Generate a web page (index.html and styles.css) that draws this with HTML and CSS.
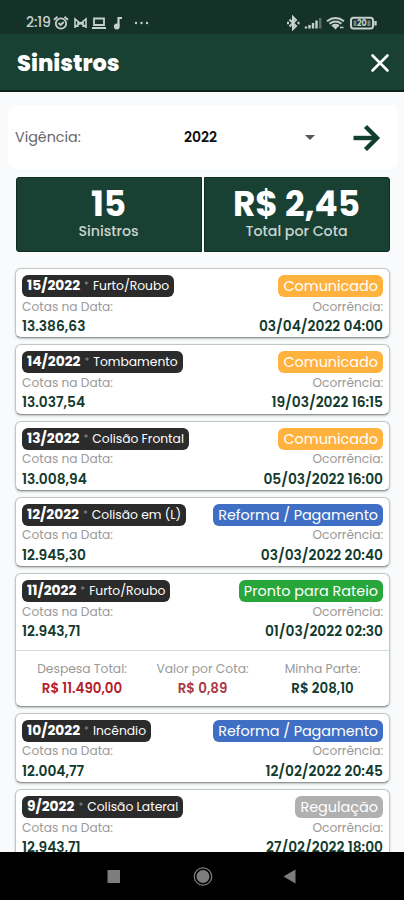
FILE: index.html
```
<!DOCTYPE html>
<html lang="pt-BR">
<head>
  <meta charset="UTF-8" />
  <meta name="viewport" content="width=device-width, initial-scale=1.0" />
  <title>Sinistros</title>
  <link rel="stylesheet" href="styles.css">
</head>
<body>
  <div class="status-bar">
    <span class="time">2:19</span>
    <svg class="status-left" width="98" height="16" viewBox="0 0 98 16" fill="none" stroke="#c6d0cc" stroke-width="1.8">
      <circle cx="9" cy="8.5" r="5.2" />
      <path d="M2 4.7l3.5-3M16 4.7l-3.5-3M6.5 8l2.2 2 3-3" />
      <path d="M23 13V4l5.5 4.5L34 4v9M26 12V7M31 12V7M23 12l5.5-4 5.5 4" stroke-width="1.6" />
      <path d="M42 3.5h10V10H42zM40 13h14" />
      <path d="M66.5 11V3H70" stroke-width="2.2" />
      <circle cx="64.8" cy="11.5" r="2" fill="#c6d0cc" />
      <g fill="#c6d0cc" stroke="none">
        <circle cx="84" cy="8" r="1.2" />
        <circle cx="89.5" cy="8" r="1.2" />
        <circle cx="95" cy="8" r="1.2" />
      </g>
    </svg>
    <svg class="status-right" width="92" height="16" viewBox="0 0 92 16" fill="none" stroke="#c6d0cc" stroke-width="1.4">
      <path d="M3.5 4.5L10 11l-3 3V2l3 3-6.5 6.5" stroke-width="2" />
      <path d="M1 8h2M11.5 8h2" stroke-width="2.4" />
      <g stroke-width="2.4">
        <path d="M20 13.5v-2M23.5 13.5V10M27 13.5V8M30.5 13.5V5.5" />
        <path d="M34.2 13.5V3" stroke="#5c706a" />
      </g>
      <path d="M41 6.3q8.5-6.5 17 0M43.5 8.7q6-4.5 12 0M46 11q3.5-2.3 7 0" stroke-width="2" />
      <path d="M47.5 11.3l2 2.2 2-2.2zM54 12.5h3.5" fill="#c6d0cc" />
      <rect x="65" y="2.8" width="22" height="10.7" rx="2.5" stroke-width="2" />
      <path d="M89.5 6v4.5" stroke-width="2.4" />
      <path d="M67.5 5.5h3V11h-3zM81.5 5.5h3V11h-3z" fill="#71837c" stroke="none" />
      <text x="71" y="11" class="battery-text">20</text>
    </svg>
  </div>

  <header class="header">
    <h1>Sinistros</h1>
    <svg width="20" height="20" viewBox="0 0 20 20" stroke="#fff" stroke-width="2.6" stroke-linecap="round">
      <path d="M2.5 2.5l15 15M17.5 2.5l-15 15" />
    </svg>
  </header>

  <main class="content">
    <div class="filter">
      <span class="filter-label">Vigência:</span>
      <span class="filter-value">2022</span>
      <span class="caret"></span>
      <svg width="28" height="28" viewBox="0 0 28 28" fill="none" stroke="#123f30" stroke-width="4.4">
        <path d="M.5 15H24" />
        <path d="M12.500 3.500L24 15 12.500 26.500" />
      </svg>
    </div>

    <div class="summary">
      <div class="summary-box">
        <strong>15</strong>
        <span>Sinistros</span>
      </div>
      <div class="summary-box total">
        <strong>R$ 2,45</strong>
        <span>Total por Cota</span>
      </div>
    </div>

    <div class="list">
      <div class="card">
        <div class="row">
          <span class="tag"><b>15/2022</b><i>*</i><span class="kind">Furto/Roubo</span></span>
          <span class="status comunicado">Comunicado</span>
        </div>
        <div class="row labels"><span>Cotas na Data:</span><span>Ocorrência:</span></div>
        <div class="row values"><span>13.386,63</span><span>03/04/2022 04:00</span></div>
      </div>
      <div class="card">
        <div class="row">
          <span class="tag"><b>14/2022</b><i>*</i><span class="kind">Tombamento</span></span>
          <span class="status comunicado">Comunicado</span>
        </div>
        <div class="row labels"><span>Cotas na Data:</span><span>Ocorrência:</span></div>
        <div class="row values"><span>13.037,54</span><span>19/03/2022 16:15</span></div>
      </div>
      <div class="card">
        <div class="row">
          <span class="tag"><b>13/2022</b><i>*</i><span class="kind">Colisão Frontal</span></span>
          <span class="status comunicado">Comunicado</span>
        </div>
        <div class="row labels"><span>Cotas na Data:</span><span>Ocorrência:</span></div>
        <div class="row values"><span>13.008,94</span><span>05/03/2022 16:00</span></div>
      </div>
      <div class="card">
        <div class="row">
          <span class="tag"><b>12/2022</b><i>*</i><span class="kind">Colisão em (L)</span></span>
          <span class="status reforma">Reforma / Pagamento</span>
        </div>
        <div class="row labels"><span>Cotas na Data:</span><span>Ocorrência:</span></div>
        <div class="row values"><span>12.945,30</span><span>03/03/2022 20:40</span></div>
      </div>
      <div class="card open">
        <div class="row">
          <span class="tag"><b>11/2022</b><i>*</i><span class="kind">Furto/Roubo</span></span>
          <span class="status pronto">Pronto para Rateio</span>
        </div>
        <div class="row labels"><span>Cotas na Data:</span><span>Ocorrência:</span></div>
        <div class="row values"><span>12.943,71</span><span>01/03/2022 02:30</span></div>
        <div class="costs">
          <div><span>Despesa Total:</span><b class="red">R$ 11.490,00</b></div>
          <div><span>Valor por Cota:</span><b class="red soft">R$ 0,89</b></div>
          <div><span>Minha Parte:</span><b>R$ 208,10</b></div>
        </div>
      </div>
      <div class="card">
        <div class="row">
          <span class="tag"><b>10/2022</b><i>*</i><span class="kind">Incêndio</span></span>
          <span class="status reforma">Reforma / Pagamento</span>
        </div>
        <div class="row labels"><span>Cotas na Data:</span><span>Ocorrência:</span></div>
        <div class="row values"><span>12.004,77</span><span>12/02/2022 20:45</span></div>
      </div>
      <div class="card">
        <div class="row">
          <span class="tag"><b>9/2022</b><i>*</i><span class="kind">Colisão Lateral</span></span>
          <span class="status regulacao">Regulação</span>
        </div>
        <div class="row labels"><span>Cotas na Data:</span><span>Ocorrência:</span></div>
        <div class="row values"><span>12.943,71</span><span>27/02/2022 18:00</span></div>
      </div>
    </div>
  </main>

  <nav class="nav-bar">
    <svg width="404" height="48" viewBox="0 0 404 48" fill="#7d7d7d">
      <rect x="107.5" y="18" width="12.5" height="13" />
      <circle cx="203" cy="24.5" r="6.5" />
      <circle cx="203" cy="24.5" r="8.7" fill="none" stroke="#7d7d7d" stroke-width="1.3" />
      <path d="M283.500 24.500l12-7v14z" />
    </svg>
  </nav>
</body>
</html>
```
FILE: styles.css
```
* {
  box-sizing: border-box;
}
body {
  font-family: 'Poppins', 'Inter', sans-serif;
  margin: 0;
  height: 900px;
  display: flex;
  flex-direction: column;
  overflow: hidden;
  background: #f8fafb;
  color: #123a2e;
}
.status-bar {
  display: flex;
  align-items: center;
  height: 34px;
  flex: none;
  padding: 11px 26px 0;
  background: #153229;
  color: #c6d0cc;
}
.time {
  width: 26px;
  font-size: 14px;
  font-weight: 500;
  letter-spacing: -0.1px;
}
.status-right {
  margin-left: auto;
}
.battery-text {
  font-size: 8px;
  font-weight: 700;
  fill: #c6d0cc;
  stroke: none;
}
.header {
  display: flex;
  align-items: center;
  justify-content: space-between;
  height: 58px;
  flex: none;
  padding: 2px 14px 0 17px;
  background: #194133;
  border-bottom: 2px solid #0b2019;
}
.header h1 {
  margin: 0;
  color: #fff;
  font-size: 22.5px;
  font-weight: 800;
}
.content {
  flex: 1;
  min-height: 0;
  overflow: hidden;
  padding-top: 13px;
}
.filter {
  display: flex;
  align-items: center;
  height: 64px;
  margin: 0 6px 0 8px;
  padding: 0 16px 0 7px;
  border-radius: 8px;
  background: #fff;
}
.filter-label {
  width: 169px;
  color: #666;
  font-size: 14.3px;
}
.filter-value {
  width: 121px;
  color: #111;
  font-size: 14px;
  font-weight: 600;
}
.caret {
  width: 10px;
  margin-right: 38px;
  border: 5px solid transparent;
  border-top-color: #555;
  border-bottom: 0;
}
.summary {
  display: grid;
  grid-template-columns: 186px 186px;
  gap: 2px;
  margin: 8px 0 0 15.5px;
}
.summary-box {
  display: flex;
  flex-direction: column;
  align-items: center;
  height: 75px;
  padding-top: 7px;
  border: 1px solid #0e2c21;
  border-radius: 3px 0 0 3px;
  background: #194133;
  color: #fff;
}
.total {
  border-radius: 0 3px 3px 0;
}
.summary-box strong {
  font-size: 34.3px;
  font-weight: 700;
  line-height: 38px;
}
.summary-box span {
  color: #c9d5d0;
  font-size: 14.2px;
  font-weight: 500;
  line-height: 17px;
}
.list {
  display: grid;
  gap: 6px;
  margin: 16px 14px 0 15px;
}
.card {
  height: 70.3px;
  padding: 6px 6px 0;
  border: 1px solid #c2c7c6;
  border-bottom-color: #929897;
  border-radius: 6px;
  background: #fff;
  box-shadow: 0 1px 2px #bbc1c0;
}
.open {
  height: 133.7px;
}
.row {
  display: flex;
  align-items: center;
  justify-content: space-between;
  white-space: nowrap;
}
.tag {
  display: flex;
  align-items: center;
  height: 22px;
  padding: 0 5px;
  border-radius: 6px;
  background: #2b2b2b;
  color: #fff;
}
.tag b {
  font-size: 13.8px;
  font-weight: 700;
}
.tag i {
  margin: 0 4px;
  color: #8a8a8a;
  font-size: 10px;
  font-style: normal;
}
.kind {
  font-size: 12.3px;
}
.status {
  height: 22px;
  padding: 0 5px;
  border-radius: 6px;
  color: #fff;
  font-size: 14.4px;
  line-height: 22px;
}
.comunicado {
  background: #ffb23e;
}
.reforma {
  background: #3e6fc4;
  letter-spacing: -0.07px;
}
.pronto {
  background: #27a63a;
}
.regulacao {
  background: #b0b0b0;
}
.labels {
  height: 19px;
  color: #999;
  font-size: 12.2px;
}
.values {
  height: 22px;
  font-size: 13.8px;
  font-weight: 600;
}
.costs {
  display: grid;
  grid-template-columns: 120px 121px 119px;
  height: 56px;
  margin: 7px -6px 0;
  padding: 8px 6px 0;
  border-top: 1px solid #d8dcdb;
  text-align: center;
}
.costs span {
  display: block;
  color: #999;
  font-size: 12.3px;
  line-height: 19px;
}
.costs b {
  display: block;
  font-size: 13.4px;
  font-weight: 600;
  line-height: 21px;
}
.costs .red {
  color: #b3202a;
}
.costs .soft {
  color: #a83a45;
}
.nav-bar {
  height: 48px;
  flex: none;
  background: #000;
}
```
